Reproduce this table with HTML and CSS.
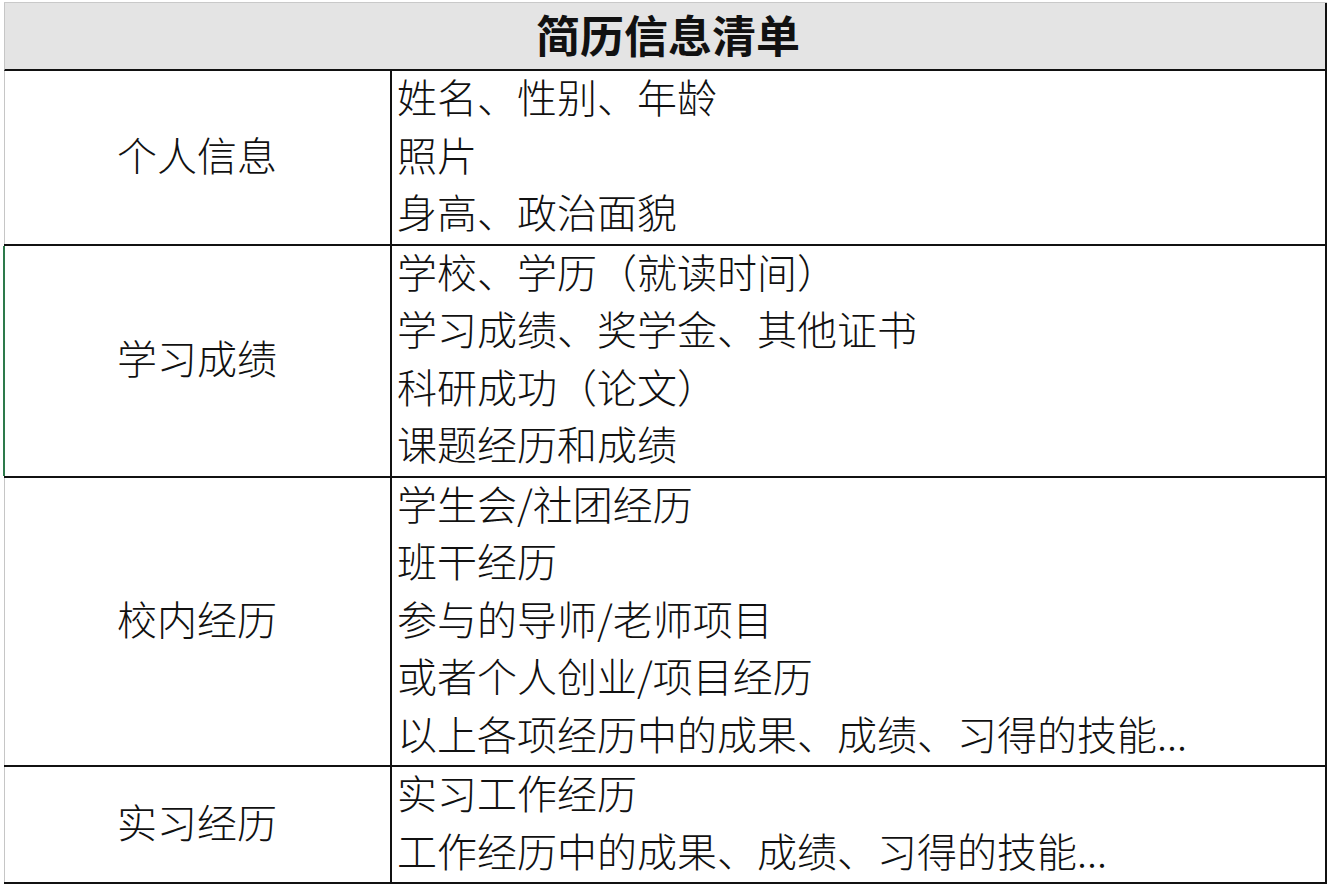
FILE: index.html
```html
<!DOCTYPE html>
<html lang="zh-CN">
<head>
<meta charset="utf-8">
<title>简历信息清单</title>
<link rel="stylesheet" href="styles.css">
</head>
<body>
<div class="sheet">
  <div class="title"><span class="title-text">简历信息清单</span></div>
  <div class="row">
    <div class="label"><span class="shift">个人信息</span></div>
    <div class="items">
      <div>姓名、性别、年龄</div>
      <div>照片</div>
      <div>身高、政治面貌</div>
    </div>
  </div>
  <div class="row row-active">
    <div class="label"><span class="shift">学习成绩</span></div>
    <div class="items">
      <div>学校、学历（就读时间）</div>
      <div>学习成绩、奖学金、其他证书</div>
      <div>科研成功（论文）</div>
      <div>课题经历和成绩</div>
    </div>
  </div>
  <div class="row">
    <div class="label"><span class="shift">校内经历</span></div>
    <div class="items">
      <div>学生会/社团经历</div>
      <div>班干经历</div>
      <div>参与的导师/老师项目</div>
      <div>或者个人创业/项目经历</div>
      <div>以上各项经历中的成果、成绩、习得的技能...</div>
    </div>
  </div>
  <div class="row">
    <div class="label"><span class="shift">实习经历</span></div>
    <div class="items">
      <div>实习工作经历</div>
      <div>工作经历中的成果、成绩、习得的技能...</div>
    </div>
  </div>
</div>
</body>
</html>
```

FILE: styles.css
```css
html, body {
  margin: 0;
  padding: 0;
  background: #ffffff;
}

body {
  font-family: "Noto Sans CJK SC", "Noto Sans", sans-serif;
  color: #111111;
}

.sheet {
  margin-top: 2px;
  margin-left: 4px;
  width: 1323px;
  border-top: 1px solid #c9c9c9;
}

.title {
  box-sizing: border-box;
  height: 68px;
  background: #e4e4e4;
  border-left: 1px solid #c6c6c6;
  border-right: 2px solid #111111;
  border-bottom: 2px solid #111111;
  display: flex;
  align-items: center;
  justify-content: center;
  font-size: 44px;
  font-weight: 700;
  padding-left: 6px;
  padding-bottom: 5px;
}

.title-text {
  line-height: 1;
}

.row {
  display: grid;
  grid-template-columns: 388px 1fr;
  border-bottom: 2px solid #111111;
  border-right: 2px solid #111111;
}

.label {
  border-left: 1px solid #c6c6c6;
  border-right: 2px solid #111111;
  display: flex;
  align-items: center;
  justify-content: center;
  font-size: 40px;
  font-weight: 300;
  line-height: 57.5px;
  padding-right: 1px;
  padding-bottom: 5px;
}

.row-active .label {
  border-left: 2px solid #2d7a4b;
  margin-left: -1px;
}

.items {
  font-size: 40px;
  font-weight: 300;
  line-height: 57.5px;
  padding-left: 5px;
  white-space: nowrap;
  margin-top: -3px;
  padding-bottom: 3px;
}
```
